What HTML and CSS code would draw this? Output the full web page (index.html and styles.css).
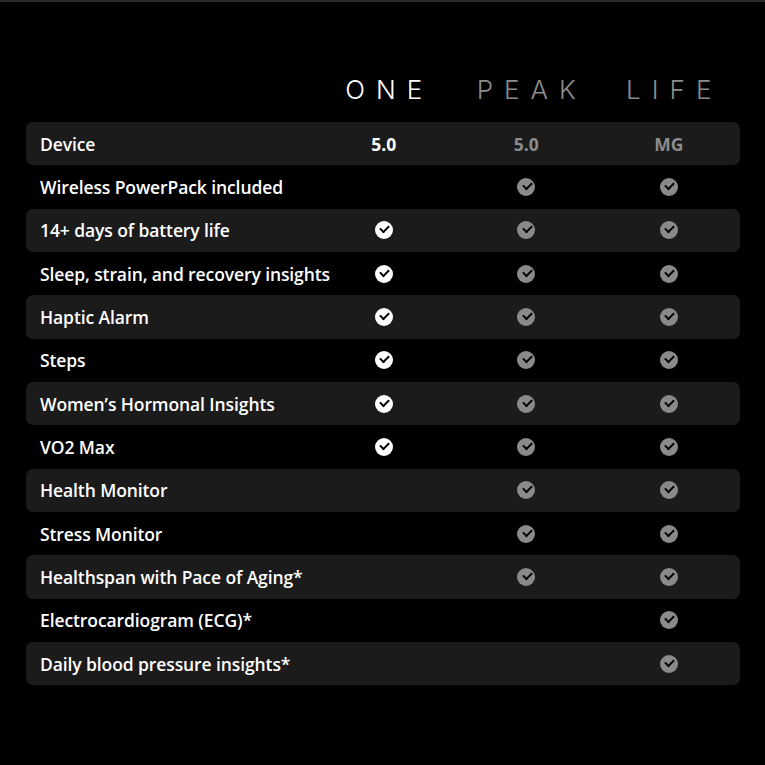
FILE: index.html
```html
<!DOCTYPE html>
<html lang="en">
<head>
<meta charset="utf-8">
<link rel="stylesheet" href="styles.css">
<title>Compare</title>
</head>
<body>
<div class="topline"></div>
<main class="table">
  <div class="head">
    <div></div>
    <div class="plan one">ONE</div>
    <div class="plan">PEAK</div>
    <div class="plan">LIFE</div>
  </div>
  <div class="row shade"><div class="label">Device</div><div class="val one">5.0</div><div class="val">5.0</div><div class="val">MG</div></div>
  <div class="row"><div class="label">Wireless PowerPack included</div><div class="cell"></div><div class="cell"><span class="chk g"></span></div><div class="cell"><span class="chk g"></span></div></div>
  <div class="row shade"><div class="label">14+ days of battery life</div><div class="cell"><span class="chk w"></span></div><div class="cell"><span class="chk g"></span></div><div class="cell"><span class="chk g"></span></div></div>
  <div class="row"><div class="label">Sleep, strain, and recovery insights</div><div class="cell"><span class="chk w"></span></div><div class="cell"><span class="chk g"></span></div><div class="cell"><span class="chk g"></span></div></div>
  <div class="row shade"><div class="label">Haptic Alarm</div><div class="cell"><span class="chk w"></span></div><div class="cell"><span class="chk g"></span></div><div class="cell"><span class="chk g"></span></div></div>
  <div class="row"><div class="label">Steps</div><div class="cell"><span class="chk w"></span></div><div class="cell"><span class="chk g"></span></div><div class="cell"><span class="chk g"></span></div></div>
  <div class="row shade"><div class="label">Women’s Hormonal Insights</div><div class="cell"><span class="chk w"></span></div><div class="cell"><span class="chk g"></span></div><div class="cell"><span class="chk g"></span></div></div>
  <div class="row"><div class="label">VO2 Max</div><div class="cell"><span class="chk w"></span></div><div class="cell"><span class="chk g"></span></div><div class="cell"><span class="chk g"></span></div></div>
  <div class="row shade"><div class="label">Health Monitor</div><div class="cell"></div><div class="cell"><span class="chk g"></span></div><div class="cell"><span class="chk g"></span></div></div>
  <div class="row"><div class="label">Stress Monitor</div><div class="cell"></div><div class="cell"><span class="chk g"></span></div><div class="cell"><span class="chk g"></span></div></div>
  <div class="row shade"><div class="label">Healthspan with Pace of Aging*</div><div class="cell"></div><div class="cell"><span class="chk g"></span></div><div class="cell"><span class="chk g"></span></div></div>
  <div class="row"><div class="label">Electrocardiogram (ECG)*</div><div class="cell"></div><div class="cell"></div><div class="cell"><span class="chk g"></span></div></div>
  <div class="row shade"><div class="label">Daily blood pressure insights*</div><div class="cell"></div><div class="cell"></div><div class="cell"><span class="chk g"></span></div></div>
</main>
</body>
</html>
```
FILE: styles.css
```css
html, body {
  margin: 0;
  padding: 0;
  background: #000;
}
body {
  width: 765px;
  height: 765px;
  overflow: hidden;
  font-family: "Open Sans", "Lato", "Liberation Sans", sans-serif;
  color: #fff;
}
.topline {
  height: 2px;
  background: #2b2b2b;
}
.table {
  margin: 0 25px 0 26px;
  padding-top: 68px;
}
.head, .row {
  display: grid;
  grid-template-columns: minmax(0, 1fr) 142.5px 142.5px 142.5px;
  align-items: center;
}
.head {
  height: 38px;
  padding-bottom: 14px;
}
.plan {
  text-align: center;
  font-family: "Inter", "Liberation Sans", sans-serif;
  font-weight: 350;
  font-size: 26px;
  letter-spacing: 11px;
  padding-left: 11px;
  color: #8c8c8c;
}
.plan.one {
  color: #fff;
}
.row {
  height: 43.33px;
  border-radius: 7px;
}
.row.shade {
  background: #1b1b1b;
}
.label {
  padding-left: 14px;
  font-size: 17.5px;
  font-weight: 600;
  letter-spacing: -0.1px;
  white-space: nowrap;
}
.val {
  text-align: center;
  font-weight: 700;
  font-size: 17.5px;
  color: #8c8c8c;
}
.val.one {
  color: #fff;
}
.cell {
  display: flex;
  justify-content: center;
  align-items: center;
}
.chk {
  position: relative;
  width: 18px;
  height: 18px;
  border-radius: 50%;
}
.chk.w { background: #fff; }
.chk.g { background: #8a8a8a; }
.chk::after {
  content: "";
  position: absolute;
  left: 5.5px;
  top: 4px;
  width: 7px;
  height: 4px;
  border-left: 2.2px solid #000;
  border-bottom: 2.2px solid #000;
  transform: rotate(-45deg);
}
```
